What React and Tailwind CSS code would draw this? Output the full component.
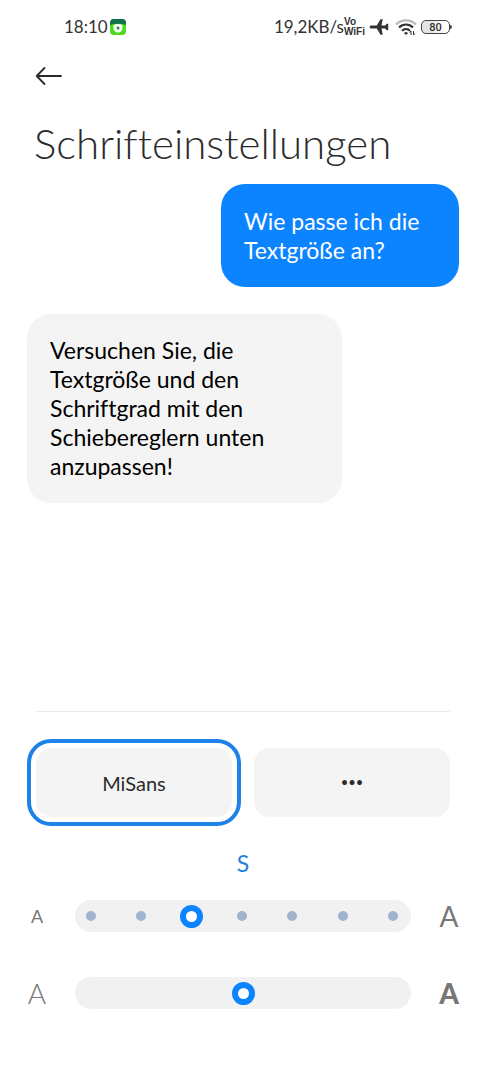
import { useState } from 'react';

const fonts = ['MiSans', '•••'];
const sizes = ['XS', 'XS', 'S', 'M', 'L', 'XL', 'XXL'];

const sliderClass =
  'relative block w-full h-8 appearance-none bg-transparent outline-none cursor-pointer [&::-webkit-slider-thumb]:appearance-none [&::-webkit-slider-thumb]:size-[23px] [&::-webkit-slider-thumb]:rounded-full [&::-webkit-slider-thumb]:border-[6px] [&::-webkit-slider-thumb]:border-solid [&::-webkit-slider-thumb]:border-[#0d84ff] [&::-webkit-slider-thumb]:bg-white';

const StatusBar = () => (
  <div className="flex items-center justify-between h-[54px] pl-16 pr-[34px] text-[#333]">
    <div className="flex items-center gap-0.5">
      <span className="text-[17px]">18:10</span>
      <svg width="16" height="16" viewBox="0 0 16 16">
        <rect width="16" height="16" rx="4" fill="#4fd822" />
        <path d="M0 6V4a4 4 0 0 1 4-4h8a4 4 0 0 1 4 4v2Q8 3.500 0 6z" fill="#12704a" />
        <path d="M3.500 6Q8 4 12.500 6V9a4.500 4.500 0 0 1-9 0z" fill="#f4fff0" />
        <circle cx="8" cy="9" r="1.500" fill="#2f7a6a" />
      </svg>
    </div>
    <div className="flex items-center">
      <span className="text-[17px]">19,2KB/s</span>
      <span className="flex flex-col font-['Liberation_Sans',sans-serif] text-[10px] leading-[10px] font-bold">
        <span>Vo</span>
        <span>WiFi</span>
      </span>
      <svg className="ml-1" width="20" height="16" viewBox="0 0 20 16" fill="#333">
        <path d="M.5 8c0-.9.900-1.500 2-1.500h5.300L11.500.3h2.200L12.500 6.500h3.700L17.700 4.700h1.500V11.300h-1.500L16.200 9.500h-3.700l1.200 6.200h-2.200L7.800 9.500H2.500C1.400 9.500.5 8.900.5 8z" />
      </svg>
      <svg className="ml-1.5" width="22" height="18" viewBox="0 0 22 18" fill="none" strokeWidth="2.200">
        <path d="M1 6.500C6.500 1 15.500 1 21 6.500" stroke="#bbb" />
        <path d="M4 9.500c4-4 10-4 14 0" stroke="#333" />
        <path d="M7 12.800c2.300-2.300 5.700-2.300 8 0" stroke="#333" />
        <path d="M9.500 15Q11 14 12.500 15L11 16.500z" fill="#333" stroke="#333" strokeWidth="1" />
        <path d="M16 17v-4l-1.300 1.500M18.500 13v4l1.300-1.500" stroke="#333" strokeWidth="1" />
      </svg>
      <div className="flex items-center ml-1">
        <span className="flex items-center justify-center w-[29px] h-[14px] rounded-[5px] border border-[#444] font-['Roboto',sans-serif] text-[11px] leading-none font-medium bg-linear-to-r from-[#e4e4e4] from-30% to-white to-80%">
          80
        </span>
        <span className="w-0.5 h-1 bg-[#444] rounded-r-sm"></span>
      </div>
    </div>
  </div>
);

const App = () => {
  const [font, setFont] = useState(0);
  const [size, setSize] = useState(2);
  const [weight, setWeight] = useState(50);

  return (
    <div className="flex flex-col min-h-screen bg-white font-['Lato',sans-serif] text-[#2b2b2b] [font-variant-ligatures:none]">
      <StatusBar />

      <header className="px-[34px]">
        <button aria-label="Zurück" className="flex items-center h-11">
          <svg width="30" height="20" viewBox="0 0 30 20" fill="none" stroke="#2b2b2b" strokeWidth="1.8" strokeLinecap="round" strokeLinejoin="round">
            <path d="M27 10H3M10.500 2L2.700 10l7.800 8" />
          </svg>
        </button>
        <h1 className="pt-5 text-[42px] leading-[50px] font-light">Schrifteinstellungen</h1>
      </header>

      <main className="flex flex-col px-[27px] pt-4 text-[23px] leading-[29px]">
        <p className="self-end w-[238px] px-[23px] pt-[23px] pb-[22px] rounded-3xl bg-[#0d84ff] text-white">
          Wie passe ich die Textgröße an?
        </p>
        <p className="self-start w-[315px] mt-[27px] px-[23px] py-[22px] rounded-3xl bg-[#f4f4f4] text-black">
          Versuchen Sie, die Textgröße und den Schriftgrad mit den Schiebereglern unten anzupassen!
        </p>
      </main>

      <section className="mt-auto pb-[71px]">
        <hr className="mx-9 border-[#ebebeb]" />

        <div className="flex gap-1 px-[27px] pt-[27px]">
          {fonts.map((name, i) => (
            <button
              key={name}
              onClick={() => setFont(i)}
              aria-pressed={font === i}
              className={`flex-1 p-[5px] rounded-3xl border-4 ${font === i ? 'border-[#1f82e6]' : 'border-transparent'}`}
            >
              <span className={`flex items-center justify-center h-[69px] rounded-2xl bg-[#f4f4f4] ${i === 0 ? 'text-xl' : 'text-[13px]'}`}>
                {name}
              </span>
            </button>
          ))}
        </div>

        <p className="pt-[22px] text-center text-[23px] leading-[30px] text-[#1f7fe0]">{sizes[size]}</p>

        <div className="flex items-center gap-[17px] px-4 pt-[22px] text-[#777]">
          <label htmlFor="size" className="w-[42px] text-center text-lg">A</label>
          <div className="relative flex-1 h-8 pl-1 pr-1.5 rounded-full bg-[#f1f1f1]">
            <div className="absolute inset-0 flex items-center justify-between pl-[11px] pr-[13px]">
              {sizes.map((_, i) => (
                <span key={i} className="size-2.5 rounded-full bg-[#a0b3cf]"></span>
              ))}
            </div>
            <input id="size" type="range" min="0" max="6" value={size} onChange={(e) => setSize(Number(e.target.value))} className={sliderClass} />
          </div>
          <span className="w-[42px] text-center text-[28px] leading-8">A</span>
        </div>

        <div className="flex items-center gap-[17px] px-4 pt-[45px] text-[#777]">
          <label htmlFor="weight" className="w-[42px] text-center text-[28px] leading-8 font-light">A</label>
          <div className="flex-1 h-8 px-1 rounded-full bg-[#f1f1f1]">
            <input id="weight" type="range" min="0" max="100" value={weight} onChange={(e) => setWeight(Number(e.target.value))} className={sliderClass} />
          </div>
          <span className="w-[42px] text-center text-[28px] leading-8 font-black">A</span>
        </div>
      </section>
    </div>
  );
};

export default App;
